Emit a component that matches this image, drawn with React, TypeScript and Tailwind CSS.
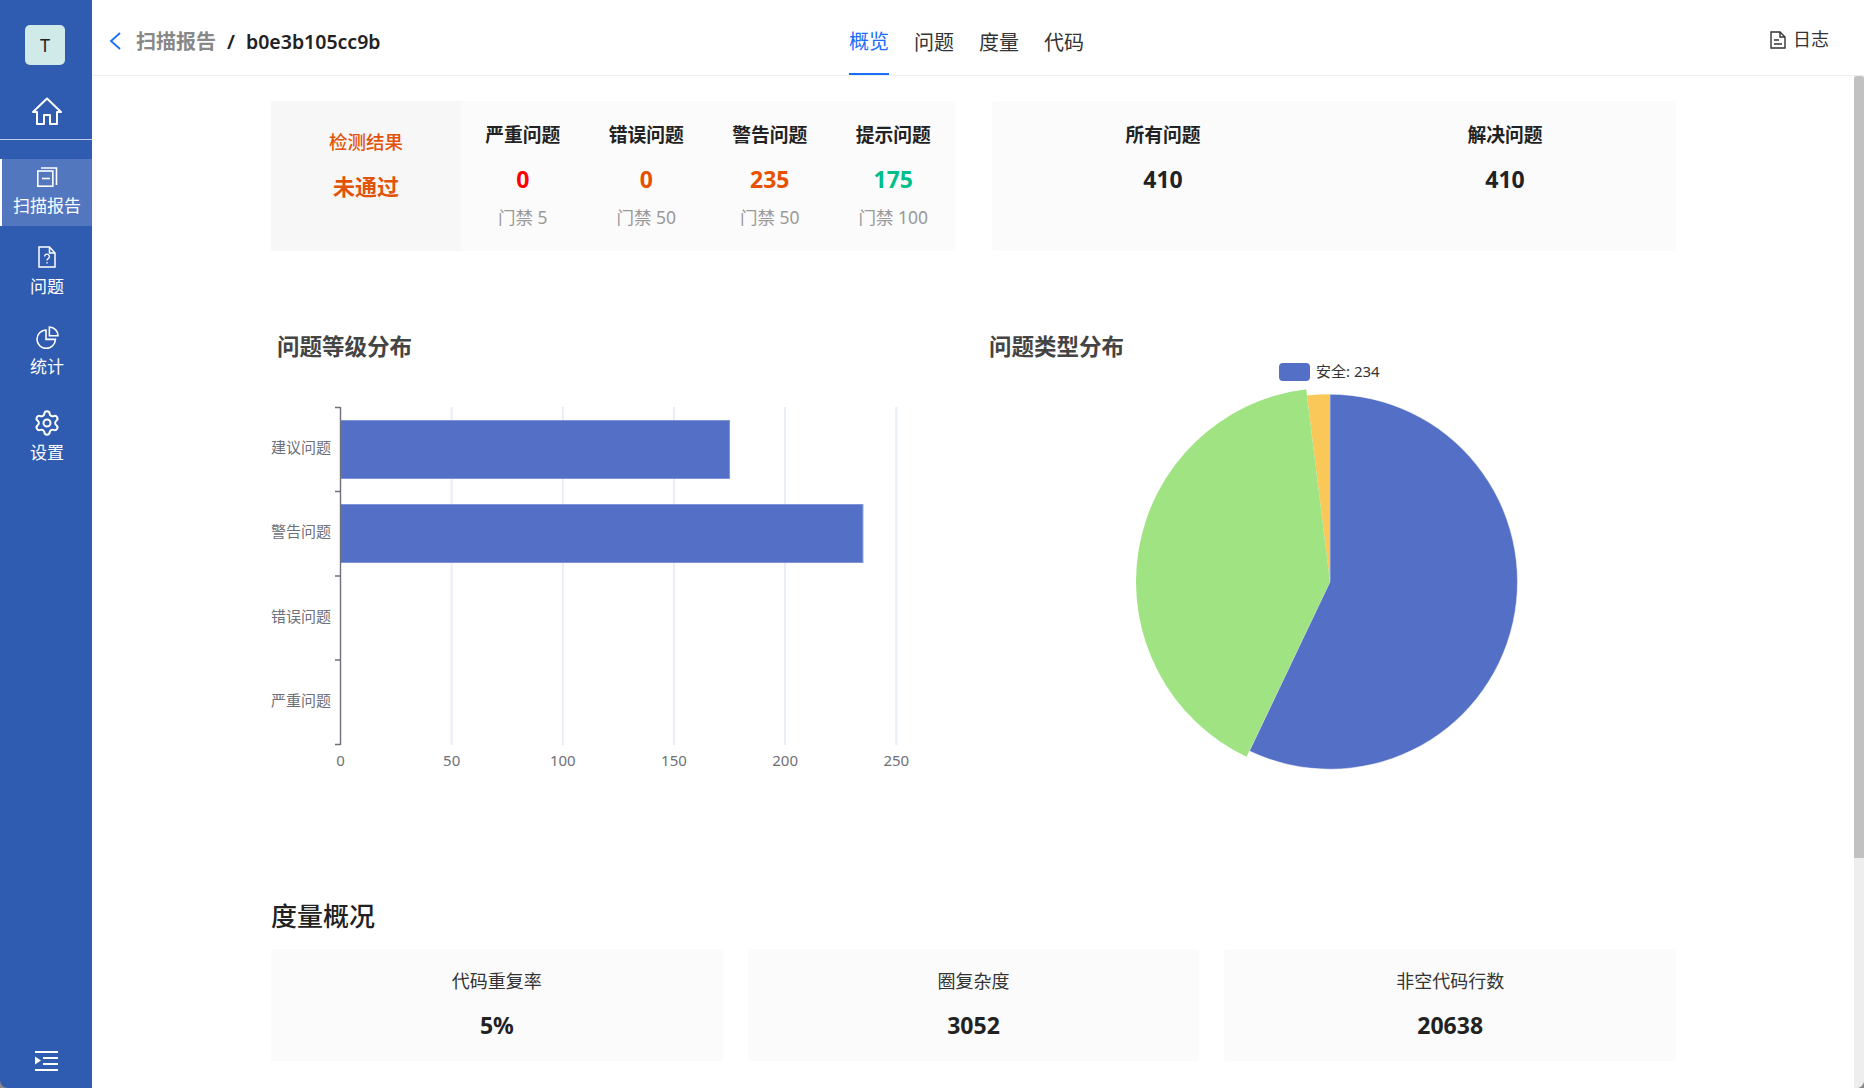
import type { ReactNode } from 'react';
import { Settings } from 'lucide-react';

const levelStats = [
  { title: '严重问题', value: '0', gate: '门禁 5', color: 'text-[#ff0000]' },
  { title: '错误问题', value: '0', gate: '门禁 50', color: 'text-[#e65100]' },
  { title: '警告问题', value: '235', gate: '门禁 50', color: 'text-[#e65100]' },
  { title: '提示问题', value: '175', gate: '门禁 100', color: 'text-[#00bf8a]' },
];

const metrics = [
  { title: '代码重复率', value: '5%' },
  { title: '圈复杂度', value: '3052' },
  { title: '非空代码行数', value: '20638' },
];

const tabs = ['概览', '问题', '度量', '代码'];

function sector(cx: number, cy: number, r: number, from: number, to: number) {
  const point = (deg: number) => {
    const rad = (deg * Math.PI) / 180;
    return `${(cx + r * Math.sin(rad)).toFixed(2)} ${(cy - r * Math.cos(rad)).toFixed(2)}`;
  };
  const large = to - from > 180 ? 1 : 0;
  return `M${cx} ${cy} L${point(from)} A${r} ${r} 0 ${large} 1 ${point(to)} Z`;
}

function NavItem({
  icon,
  label,
  className,
  labelClass,
}: {
  icon: ReactNode;
  label: string;
  className: string;
  labelClass: string;
}) {
  return (
    <div className={`flex flex-col items-center ${className}`}>
      {icon}
      <span className={`text-[17px] leading-[24px] text-white ${labelClass}`}>{label}</span>
    </div>
  );
}

function Sidebar() {
  return (
    <aside className="flex h-full w-[92px] shrink-0 flex-col rounded-bl-[8px] bg-[#2f5cb0]">
      <div className="ml-[25px] mt-[25px] flex h-[40px] w-[40px] items-center justify-center rounded-[5px] bg-[#cfeae9] text-[18px] text-[#222]">
        T
      </div>
      <svg className="ml-[32px] mt-[32px]" width="30" height="28" viewBox="0 0 30 28" fill="none" stroke="#fff" strokeWidth="2" strokeLinejoin="round">
        <path d="M15 1.5 L29 15 H25 V27 H18 V18 H12 V27 H5 V15 H1 Z" />
      </svg>
      <div className="mt-[14px] h-px bg-white/70" />
      <nav className="mt-[19px] flex flex-col">
        <NavItem
          className="h-[67px] border-l-2 border-white bg-[#5377bf] pt-[8px]"
          labelClass="mt-[7px]"
          label="扫描报告"
          icon={
            <svg width="22" height="20" viewBox="0 0 22 20" fill="none" stroke="#fff" strokeWidth="1.6">
              <rect x="1.8" y="4" width="15" height="15.2" />
              <path d="M5 1 H20.5 V18" />
              <path d="M6 11.5 H14" />
            </svg>
          }
        />
        <NavItem
          className="h-[80px] pl-[2px] pt-[20px]"
          labelClass="mt-[7px]"
          label="问题"
          icon={
            <svg width="18" height="22" viewBox="0 0 18 22" fill="none" stroke="#fff" strokeWidth="1.5">
              <path d="M1 1 H11.5 L17 7 V21 H1 Z" />
              <path d="M11.5 1 V7 H17" />
              <path d="M6.6 10.5 a2.4 2.4 0 1 1 3.6 2.1 c-.9.6-1.2 1-1.2 2" strokeWidth="1.3" />
              <path d="M9 16 V17.6" strokeWidth="1.3" />
            </svg>
          }
        />
        <NavItem
          className="h-[80px] pl-[2px] pt-[20px]"
          labelClass="mt-[6px]"
          label="统计"
          icon={
            <svg width="23" height="23" viewBox="0 0 23 23" fill="none" stroke="#fff" strokeWidth="1.6">
              <path d="M10 4 A9.2 9.2 0 1 0 19.4 13.4 H10 Z" />
              <path d="M13.4 1 A8.8 8.8 0 0 1 22 9.8 H13.4 Z" />
            </svg>
          }
        />
        <NavItem
          className="pl-[2px] pt-[23px]"
          labelClass="mt-[4px]"
          label="设置"
          icon={<Settings size={28} strokeWidth={1.7} color="#fff" />}
        />
      </nav>
      <svg className="mb-[16px] ml-[35px] mt-auto" width="23" height="21" viewBox="0 0 23 21" fill="#fff">
        <rect x="0" y="0" width="23" height="2" />
        <rect x="8" y="6" width="15" height="2" />
        <rect x="8" y="12" width="15" height="2" />
        <rect x="0" y="18" width="23" height="2" />
        <path d="M0 5.5 L6 9.5 L0 13.5 Z" />
      </svg>
    </aside>
  );
}

function TopBar() {
  return (
    <header className="flex h-[76px] shrink-0 border-b border-[#eeeeee]">
      <div className="flex w-[757px] items-center pl-[17px] pt-[9px]">
        <svg className="-mt-[2px]" width="12" height="18" viewBox="0 0 12 18" fill="none" stroke="#1a6efc" strokeWidth="1.8">
          <path d="M11 1 L2 9 L11 17" />
        </svg>
        <span className="ml-[15px] text-[20px] font-semibold text-[#888888]">扫描报告</span>
        <span className="ml-[11px] text-[20px] font-semibold text-[#222222]">/</span>
        <span className="ml-[11px] text-[19.5px] font-semibold text-[#222222]">b0e3b105cc9b</span>
      </div>
      <div className="flex gap-[25px]">
        {tabs.map((tab, i) => (
          <div
            key={tab}
            className={`flex h-[75px] items-center pt-[11px] text-[20px] ${
              i === 0 ? 'border-b-2 border-[#1a6efc] text-[#1a6efc]' : 'text-[#333333]'
            }`}
          >
            {tab}
          </div>
        ))}
      </div>
      <div className="ml-auto flex items-center gap-[7px] pr-[35px] pt-[4px] text-[18px] text-[#333333]">
        <svg width="16" height="18" viewBox="0 0 16 18" fill="none" stroke="#333" strokeWidth="1.4">
          <path d="M1 1 H10 L15 6 V17 H1 Z" />
          <path d="M10 1 V6 H15" />
          <path d="M4 9 H9 M4 13 H12" />
        </svg>
        日志
      </div>
    </header>
  );
}

function StatBlock({ title, value, color, gate }: { title: string; value: string; color: string; gate?: string }) {
  return (
    <div className="flex flex-1 flex-col items-center pt-[20px]">
      <div className="text-[18.8px] font-semibold leading-[28px] text-[#222222]">{title}</div>
      <div className={`mt-[15px] text-[23px] font-bold leading-[30px] ${color}`}>{value}</div>
      {gate && <div className="mt-[10px] text-[17.5px] leading-[26px] text-[#999999]">{gate}</div>}
    </div>
  );
}

function LevelChart() {
  const ticks = [0, 50, 100, 150, 200, 250];
  const x0 = 69.5;
  const unit = 2.223;
  const labels = [
    { text: '建议问题', y: 85 },
    { text: '警告问题', y: 169 },
    { text: '错误问题', y: 254 },
    { text: '严重问题', y: 338 },
  ];
  return (
    <svg width="718" height="430" viewBox="0 0 718 430">
      {ticks.slice(1).map((t) => (
        <line key={t} x1={x0 + t * unit} x2={x0 + t * unit} y1="44" y2="382" stroke="#e9edf5" strokeWidth="2" />
      ))}
      <rect x={x0} y="57.5" width={175 * unit} height="58" fill="#5470c6" stroke="#7f95d8" />
      <rect x={x0} y="141.5" width={235 * unit} height="58" fill="#5470c6" stroke="#7f95d8" />
      <path d="M69.5 44 V382 M64 44.5 H69.5 M64 128.5 H69.5 M64 213 H69.5 M64 297 H69.5 M64 381.5 H69.5" fill="none" stroke="#6e7079" strokeWidth="1.4" />
      {labels.map((l) => (
        <text key={l.text} x="60" y={l.y + 5} textAnchor="end" fontSize="15" fill="#6e7079">
          {l.text}
        </text>
      ))}
      {ticks.map((t) => (
        <text key={t} x={x0 + t * unit} y="403" textAnchor="middle" fontSize="15" fill="#6e7079">
          {t}
        </text>
      ))}
    </svg>
  );
}

function TypeChart() {
  const cx = 341;
  const cy = 200.7;
  return (
    <div>
      <div className="ml-[290px] flex h-[18px] items-center gap-[6px] text-[15px] text-[#333333]">
        <span className="h-[18px] w-[31px] rounded-[4px] bg-[#5470c6]" />
        <span className="pb-[2px] leading-[18px]">安全: 234</span>
      </div>
      <svg width="688" height="412" viewBox="0 0 688 412">
        <path d={sector(cx, cy, 187.5, 0, 205.46)} fill="#5470c6" stroke="#fff" strokeWidth="0.5" />
        <path d={sector(cx, cy, 187.5, 352.95, 360)} fill="#fac858" />
        <path d={sector(cx, cy, 194, 205.46, 352.95)} fill="#a0e382" />
      </svg>
    </div>
  );
}

function Overview() {
  return (
    <div className="ml-[179px] w-[1405px] pt-[25px]">
      <div className="flex gap-[37px]">
        <div className="flex h-[150px] w-[684px] rounded-[2px] bg-[#fbfbfb]">
          <div className="flex w-[190px] flex-col items-center rounded-l-[2px] bg-[#f7f7f7] pt-[27px] text-[#e2530a]">
            <div className="text-[18.5px] font-medium leading-[28px]">检测结果</div>
            <div className="mt-[14px] text-[22px] font-bold leading-[32px]">未通过</div>
          </div>
          {levelStats.map((s) => (
            <StatBlock key={s.title} {...s} />
          ))}
        </div>
        <div className="flex h-[150px] w-[684px] rounded-[2px] bg-[#fbfbfb]">
          <StatBlock title="所有问题" value="410" color="text-[#222222]" />
          <StatBlock title="解决问题" value="410" color="text-[#222222]" />
        </div>
      </div>

      <div className="mt-[80px] flex">
        <div className="w-[718px]">
          <h2 className="pl-[6px] text-[22.5px] font-bold leading-[32px] text-[#444444]">问题等级分布</h2>
          <LevelChart />
        </div>
        <div className="w-[687px]">
          <h2 className="text-[22.5px] font-bold leading-[32px] text-[#444444]">问题类型分布</h2>
          <TypeChart />
        </div>
      </div>

      <h2 className="mt-[105px] text-[26px] font-medium leading-[36px] text-[#222222]">度量概况</h2>
      <div className="mt-[15px] grid grid-cols-3 gap-[25px]">
        {metrics.map((m) => (
          <div key={m.title} className="flex h-[112px] flex-col items-center rounded-[2px] bg-[#fbfbfb] pt-[19px]">
            <div className="text-[18px] leading-[26px] text-[#333333]">{m.title}</div>
            <div className="mt-[15px] text-[23px] font-bold leading-[32px] text-[#222222]">{m.value}</div>
          </div>
        ))}
      </div>
    </div>
  );
}

export default function App() {
  return (
    <div className="flex h-[1088px] w-[1864px] overflow-hidden bg-[#8a8a8a] [font-family:'Noto_Sans','Noto_Sans_CJK_SC',sans-serif]">
      <Sidebar />
      <main className="flex min-w-0 flex-1 flex-col rounded-br-[8px] bg-white">
        <TopBar />
        <div className="flex min-h-0 flex-1">
          <div className="min-w-0 flex-1 overflow-hidden">
            <Overview />
          </div>
          <div className="w-[10px] shrink-0 rounded-br-[8px] bg-[#eeeeee]">
            <div className="h-[782px] rounded-t-[3px] bg-[#c1c1c1]" />
          </div>
        </div>
      </main>
    </div>
  );
}
